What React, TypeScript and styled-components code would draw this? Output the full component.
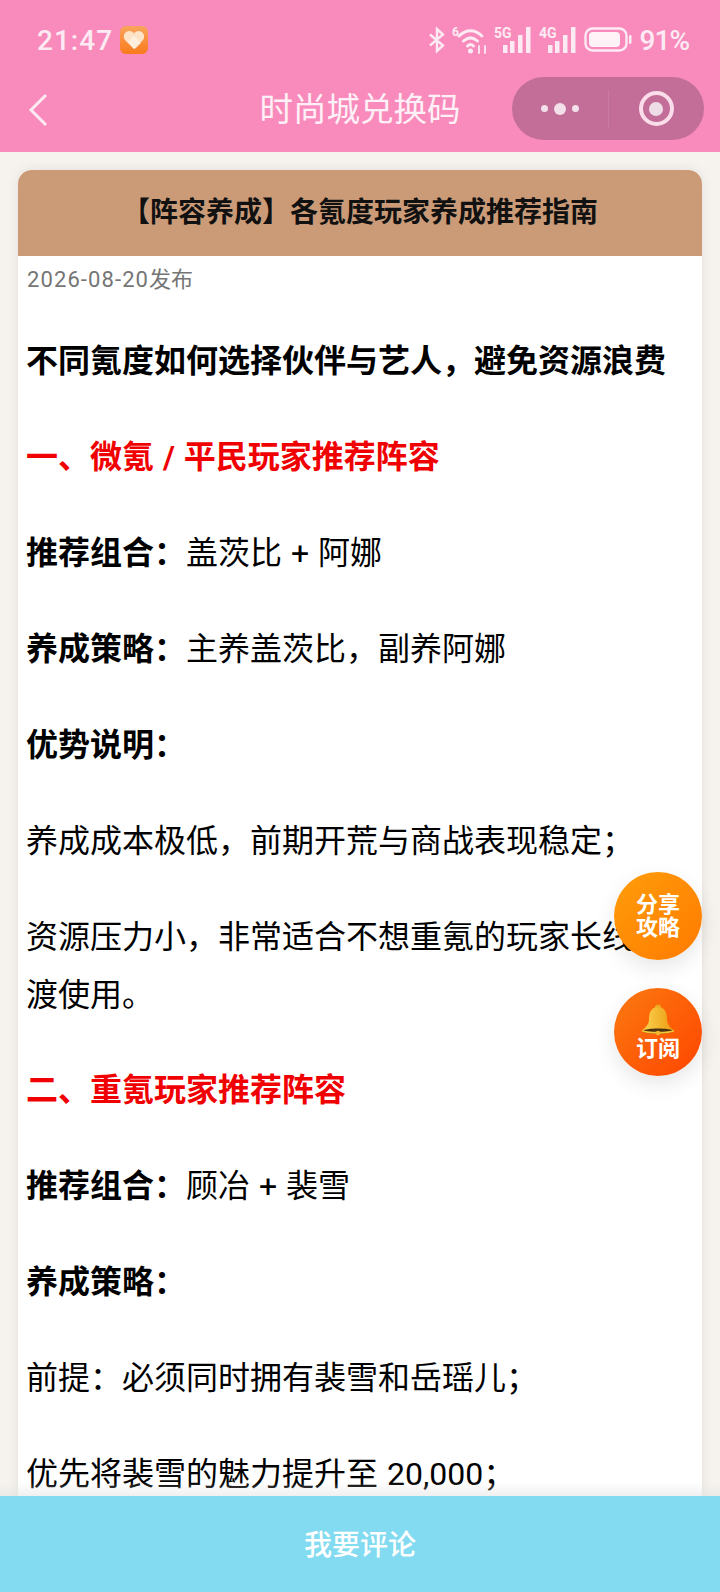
import { createGlobalStyle, styled } from 'styled-components';

const FONT = `Roboto, "Noto Sans CJK SC", "Noto Sans", sans-serif`;

const GlobalStyle = createGlobalStyle`
  html, body {
    margin: 0;
    padding: 0;
    background: #f6f3ee;
  }
  * {
    box-sizing: border-box;
  }
`;

const Page = styled.div`
  position: relative;
  display: flex;
  flex-direction: column;
  width: 720px;
  height: 1592px;
  overflow: hidden;
  font-family: ${FONT};
  background: #f6f3ee;
`;

const TopBar = styled.header`
  flex: none;
  height: 152px;
  background: #f88bbc;
  color: #fff;
`;

const StatusBar = styled.div`
  display: flex;
  align-items: center;
  justify-content: space-between;
  height: 76px;
  padding: 4px 31px 0 37px;
`;

const StatusLeft = styled.div`
  display: flex;
  align-items: center;
  gap: 7px;
`;

const Clock = styled.span`
  font-size: 28px;
  font-weight: 500;
  letter-spacing: 1px;
  color: #fdeaf3;
`;

const StatusRight = styled.div`
  display: flex;
  align-items: center;
  gap: 6px;
  color: #fdeaf3;
`;

const BatteryText = styled.span`
  margin-left: 2px;
  font-size: 28px;
  font-weight: 500;
  letter-spacing: -1px;
`;

const NavBar = styled.div`
  position: relative;
  display: flex;
  align-items: center;
  justify-content: center;
  height: 76px;
`;

const BackIcon = styled.svg`
  position: absolute;
  left: 28px;
  top: 17px;
`;

const NavTitle = styled.h1`
  margin: 0 0 16px;
  font-size: 33.500px;
  font-weight: 400;
  color: #fef0f6;
`;

const Capsule = styled.div`
  position: absolute;
  right: 16px;
  top: 1px;
  display: flex;
  align-items: center;
  width: 192px;
  height: 63px;
  border-radius: 32px;
  background: #c26e98;
`;

const CapsuleSide = styled.div`
  flex: 1;
  display: flex;
  align-items: center;
  justify-content: center;
  gap: 6px;
  height: 38px;

  & + & {
    border-left: 1px solid #c97ca3;
  }
`;

const Dot = styled.span<{ $big?: boolean }>`
  width: ${({ $big }) => ($big ? 12 : 7)}px;
  height: ${({ $big }) => ($big ? 12 : 7)}px;
  border-radius: 50%;
  background: #f3e0ea;
`;

const Target = styled.span`
  display: flex;
  align-items: center;
  justify-content: center;
  width: 35px;
  height: 35px;
  border: 4px solid #fadcea;
  border-radius: 50%;

  &::after {
    content: '';
    width: 14px;
    height: 14px;
    border-radius: 50%;
    background: #eedde6;
  }
`;

const Scroller = styled.main`
  position: relative;
  flex: 1;
  min-height: 0;
  overflow: hidden;
  padding: 18px 18px 0;

  &::after {
    content: '';
    position: absolute;
    left: 0;
    right: 0;
    bottom: 0;
    height: 14px;
    background: linear-gradient(rgba(225, 225, 225, 0), rgba(225, 225, 225, 0.5));
  }
`;

const Card = styled.article`
  background: #fff;
  border-radius: 14px 14px 0 0;
  box-shadow: 0 0 12px rgba(0, 0, 0, 0.08);
`;

const CardHeader = styled.div`
  display: flex;
  align-items: center;
  justify-content: center;
  height: 86px;
  padding-bottom: 6px;
  border-radius: 14px 14px 0 0;
  background: #cb9b78;
  font-size: 28px;
  font-weight: 700;
  color: #111;
`;

const CardBody = styled.div`
  padding: 6px 8px 0;
`;

const PublishDate = styled.div`
  height: 36px;
  padding-left: 1px;
  font-size: 22px;
  line-height: 36px;
  color: #757575;
`;

const DateDigits = styled.span`
  letter-spacing: 1.100px;
`;

const Paragraph = styled.p<{ $tone?: 'heading' | 'accent' }>`
  margin: 0 0 38.4px;
  font-size: 32px;
  line-height: 57.6px;
  word-spacing: 1px;
  color: ${({ $tone }) => ($tone === 'accent' ? '#f00000' : '#000')};
  font-weight: ${({ $tone }) => ($tone ? 700 : 400)};

  &:first-of-type {
    margin-top: 35px;
  }
`;

const Label = styled.strong`
  font-weight: 700;
`;

const Fab = styled.button<{ $top: number; $from: string; $to: string }>`
  position: absolute;
  top: ${({ $top }) => $top}px;
  right: 18px;
  display: flex;
  flex-direction: column;
  align-items: center;
  justify-content: center;
  width: 88px;
  height: 88px;
  padding: 0;
  border: none;
  border-radius: 50%;
  background: linear-gradient(135deg, ${({ $from }) => $from}, ${({ $to }) => $to});
  box-shadow: 0 8px 20px rgba(60, 60, 60, 0.12);
  color: #fff;
  font-family: ${FONT};
  font-size: 22px;
  font-weight: 700;
  line-height: 23px;
`;

const CommentBar = styled.footer`
  position: relative;
  z-index: 1;
  flex: none;
  display: flex;
  align-items: center;
  justify-content: center;
  height: 96px;
  padding-bottom: 2px;
  background: #82dbf0;
  color: #fff;
  font-size: 28px;
  font-weight: 500;
`;

function HealthIcon() {
  return (
    <svg width="28" height="28" viewBox="0 0 28 28">
      <defs>
        <linearGradient id="healthBg" x1="0" y1="0" x2="0" y2="1">
          <stop offset="0" stopColor="#f9a45c" />
          <stop offset="1" stopColor="#f97a1c" />
        </linearGradient>
      </defs>
      <rect width="28" height="28" rx="6" fill="url(#healthBg)" />
      <path d="M14 23 5 14c-3-4 0-9 4.500-9 2 0 3.500 1 4.500 2.500C15 6 16.500 5 18.500 5 23 5 26 10 23 14z" fill="#fde3c8" />
      <path d="M14 23 8 16l6-6 7 7-5 5z" fill="#fff3e4" opacity="0.8" />
    </svg>
  );
}

function Signal({ label }: { label: string }) {
  return (
    <svg width="39" height="28" viewBox="0 0 39 28" fill="currentColor">
      <text x="0" y="12" fontSize="14" fontWeight="700" fontFamily="Roboto, sans-serif">{label}</text>
      <rect x="9" y="19" width="4.500" height="8" />
      <rect x="16" y="15" width="4.500" height="12" />
      <rect x="24" y="9" width="4.500" height="18" />
      <rect x="32" y="1" width="4.500" height="26" />
    </svg>
  );
}

function StatusIcons() {
  return (
    <>
      <svg width="18" height="28" viewBox="0 0 18 28" fill="none" stroke="currentColor" strokeWidth="2.400">
        <path d="M2 8.500 15 19.500 9 25V3l6 5.500L2 19.500" />
      </svg>
      <svg width="36" height="28" viewBox="0 0 36 28" fill="none" stroke="currentColor" strokeLinecap="round">
        <text x="0" y="10" fontSize="12" fontWeight="700" fontFamily="Roboto, sans-serif" fill="currentColor" stroke="none">6</text>
        <path d="M7 10C14 3 23 3 30 10" strokeWidth="3" />
        <path d="M11.500 15C16 11 21 11 25.500 15" strokeWidth="3" />
        <path d="M15.500 20C17.500 18 19.500 18 21.500 20" strokeWidth="3" />
        <circle cx="18.500" cy="25" r="2.500" fill="currentColor" stroke="none" />
        <path d="M27 20v7M33 20v7" strokeWidth="1.800" />
      </svg>
      <Signal label="5G" />
      <Signal label="4G" />
      <svg width="48" height="28" viewBox="0 0 48 28" fill="none">
        <rect x="1.500" y="2.500" width="41" height="22" rx="7" stroke="currentColor" strokeWidth="2.400" />
        <rect x="5" y="6" width="31" height="15" rx="4" fill="#fff3f8" />
        <rect x="45" y="9" width="2.500" height="9" rx="1.200" fill="currentColor" />
      </svg>
    </>
  );
}

function Bell() {
  return (
    <svg width="34" height="33" viewBox="0 0 34 33">
      <defs>
        <linearGradient id="bellBody" x1="0" y1="0" x2="1" y2="0">
          <stop offset="0" stopColor="#fbd24e" />
          <stop offset="1" stopColor="#eb9c12" />
        </linearGradient>
      </defs>
      <circle cx="17" cy="3.500" r="3" fill="#eaa91d" />
      <path d="M17 3c-7 0-9 6-9 12 0 5-3 8-6 11h30c-3-3-6-6-6-11 0-6-2-12-9-12z" fill="url(#bellBody)" />
      <path d="M1 27c4-3.500 28-3.500 32 0-4 3.500-28 3.500-32 0z" fill="#4a3210" />
      <path d="M1 26.500c5 3 27 3 32 0" fill="none" stroke="#f4c63a" strokeWidth="1.800" />
      <circle cx="17" cy="29" r="2.200" fill="#f2b62c" />
    </svg>
  );
}

export default function App() {
  return (
    <Page>
      <GlobalStyle />
      <TopBar>
        <StatusBar>
          <StatusLeft>
            <Clock>21:47</Clock>
            <HealthIcon />
          </StatusLeft>
          <StatusRight>
            <StatusIcons />
            <BatteryText>91%</BatteryText>
          </StatusRight>
        </StatusBar>
        <NavBar>
          <BackIcon width="22" height="34" viewBox="0 0 22 34" fill="none" stroke="#fdeaf3" strokeWidth="3">
            <path d="M18 2 3 17l15 15" />
          </BackIcon>
          <NavTitle>时尚城兑换码</NavTitle>
          <Capsule>
            <CapsuleSide>
              <Dot />
              <Dot $big />
              <Dot />
            </CapsuleSide>
            <CapsuleSide>
              <Target />
            </CapsuleSide>
          </Capsule>
        </NavBar>
      </TopBar>

      <Scroller>
        <Card>
          <CardHeader>【阵容养成】各氪度玩家养成推荐指南</CardHeader>
          <CardBody>
            <PublishDate><DateDigits>2026-08-20</DateDigits>发布</PublishDate>
            <Paragraph $tone="heading">不同氪度如何选择伙伴与艺人，避免资源浪费</Paragraph>
            <Paragraph $tone="accent">一、微氪 / 平民玩家推荐阵容</Paragraph>
            <Paragraph><Label>推荐组合：</Label>盖茨比 + 阿娜</Paragraph>
            <Paragraph><Label>养成策略：</Label>主养盖茨比，副养阿娜</Paragraph>
            <Paragraph><Label>优势说明：</Label></Paragraph>
            <Paragraph>养成成本极低，前期开荒与商战表现稳定；</Paragraph>
            <Paragraph>资源压力小，非常适合不想重氪的玩家长线过渡使用。</Paragraph>
            <Paragraph $tone="accent">二、重氪玩家推荐阵容</Paragraph>
            <Paragraph><Label>推荐组合：</Label>顾冶 + 裴雪</Paragraph>
            <Paragraph><Label>养成策略：</Label></Paragraph>
            <Paragraph>前提：必须同时拥有裴雪和岳瑶儿；</Paragraph>
            <Paragraph>优先将裴雪的魅力提升至 20,000；</Paragraph>
          </CardBody>
        </Card>
      </Scroller>

      <Fab $top={872} $from="#ff9d0a" $to="#ff7a00">
        <span>分享<br />攻略</span>
      </Fab>
      <Fab $top={988} $from="#fb7a10" $to="#ff4500">
        <Bell />
        <span>订阅</span>
      </Fab>

      <CommentBar>我要评论</CommentBar>
    </Page>
  );
}
